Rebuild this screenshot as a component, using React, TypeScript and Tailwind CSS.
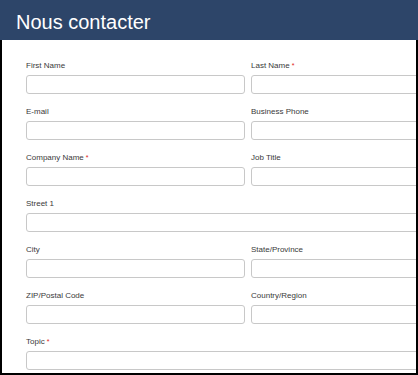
const fields = [
  { label: "First Name" },
  { label: "Last Name", required: true },
  { label: "E-mail" },
  { label: "Business Phone" },
  { label: "Company Name", required: true },
  { label: "Job Title" },
  { label: "Street 1", wide: true },
  { label: "City" },
  { label: "State/Province" },
  { label: "ZIP/Postal Code" },
  { label: "Country/Region" },
  { label: "Topic", required: true, wide: true },
];

export default function App() {
  return (
    <div className="w-[418px] h-[375px] overflow-hidden bg-white font-['Liberation_Sans',Arial,sans-serif] flex flex-col">
      {/* header */}
      <div className="h-[40px] shrink-0 bg-[#2d4569] flex items-center pl-4">
        <h1 className="text-white text-[20px] leading-none pt-[3px]">Nous contacter</h1>
      </div>

      {/* form body */}
      <div className="flex-1 min-h-0 border-l-2 border-r-2 border-b-2 border-black overflow-hidden">
        <div className="pt-[21px] pl-[24px] grid grid-cols-[219px_219px] gap-x-[6px] gap-y-[13px] w-max">
          {fields.map((f) => (
            <div key={f.label} className={f.wide ? "col-span-2" : ""}>
              <label className="block h-[10px] leading-[10px] mb-[4px] text-[8px] text-[#3a3a3a]">
                {f.label}
                {f.required && (
                  <span className="text-[#e02020] ml-[2px] text-[7px] align-top">*</span>
                )}
              </label>
              <input
                type="text"
                className="block w-full h-[19px] border border-[#c8c8c8] rounded-[3px] bg-white outline-none"
              />
            </div>
          ))}
        </div>
      </div>
    </div>
  );
}
